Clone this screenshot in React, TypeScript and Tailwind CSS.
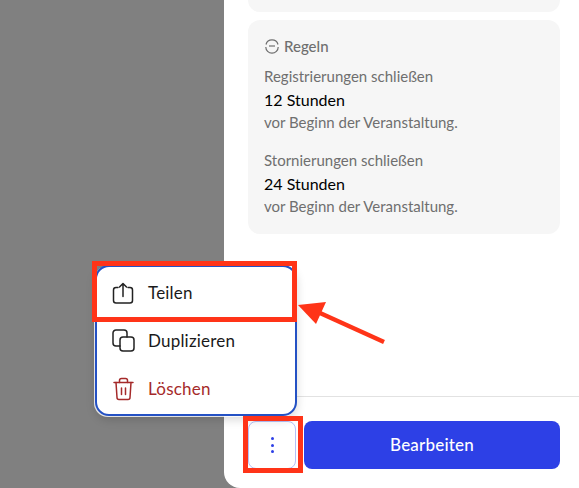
const font = "font-['Lato',sans-serif]";

export default function App() {
  return (
    <div className={`relative w-[579px] h-[488px] overflow-hidden bg-[#808080] ${font}`}>
      {/* side panel */}
      <div className="absolute left-[224px] top-0 bottom-0 w-[355px] bg-white rounded-bl-2xl flex flex-col">
        <div className="flex-1 pl-6 pr-[19px] flex flex-col gap-2">
          <div className="h-3 bg-[#f6f6f6] rounded-b-xl" />
          <div className="h-[214px] bg-[#f6f6f6] rounded-xl px-4 pt-[18px]">
            <div className="flex items-center gap-1 h-4 text-[15px] font-medium text-[#6f6f6f]">
              <svg viewBox="0 0 16 16" className="w-4 h-4" fill="none" stroke="#6f6f6f" strokeWidth="1.2">
                <path d="M2 6.500a6.200 6.200 0 0 1 12 0M14.200 9a6.200 6.200 0 0 1-12.400 0" />
                <path d="M5 8h6" />
              </svg>
              Regeln
            </div>
            <div className="mt-[14px] text-[15px] leading-4 text-[#6f6f6f]">Registrierungen schließen</div>
            <div className="mt-[8px] text-base leading-4 text-black">12 Stunden</div>
            <div className="mt-[6px] text-[15px] leading-4 text-[#6f6f6f]">vor Beginn der Veranstaltung.</div>
            <div className="mt-[22px] text-[15px] leading-4 text-[#6f6f6f]">Stornierungen schließen</div>
            <div className="mt-[8px] text-base leading-4 text-black">24 Stunden</div>
            <div className="mt-[6px] text-[15px] leading-4 text-[#6f6f6f]">vor Beginn der Veranstaltung.</div>
          </div>
        </div>
        <div className="h-[92px] border-t border-[#e2e2e2] pl-6 pr-[19px] pt-6 flex gap-2">
          <button className="w-12 h-12 rounded-lg border border-[#b5c0f8] bg-white flex flex-col items-center justify-center gap-[3.5px]">
            <span className="w-[3px] h-[3px] rounded-full bg-[#2d40e6]" />
            <span className="w-[3px] h-[3px] rounded-full bg-[#2d40e6]" />
            <span className="w-[3px] h-[3px] rounded-full bg-[#2d40e6]" />
          </button>
          <button className="flex-1 h-12 rounded-lg bg-[#2d40e6] text-white text-[17px] font-medium tracking-[0.2px]">Bearbeiten</button>
        </div>
      </div>

      {/* popup menu */}
      <div className="absolute left-[95px] top-[265px] w-[202px] h-[151px] bg-white rounded-[14px] border-2 border-[#2451c4] shadow-[-1px_1px_0_0_rgba(255,255,255,0.8),0_4px_10px_rgba(0,0,0,0.15)] flex flex-col pt-[2px]">
        <div className="h-12 flex items-center gap-[13px] pl-[14px] text-[17px] tracking-[0.2px] text-[#1a1a1a]">
          <svg viewBox="0 0 24 24" className="w-6 h-6" fill="none" stroke="#222" strokeWidth="1.500" strokeLinecap="round" strokeLinejoin="round">
            <path d="M7 6.500H5A2.500 2.500 0 0 0 2.500 9v10.500A2.500 2.500 0 0 0 5 22h14a2.500 2.500 0 0 0 2.500-2.500V9A2.500 2.500 0 0 0 19 6.500h-2" />
            <path d="M12 15.500V2.500M8.500 6 12 2.500 15.500 6" />
          </svg>
          Teilen
        </div>
        <div className="h-12 flex items-center gap-[13px] pl-[14px] text-[17px] tracking-[0.2px] text-[#1a1a1a]">
          <svg viewBox="0 0 24 24" className="w-6 h-6" fill="none" stroke="#222" strokeWidth="1.500" strokeLinecap="round" strokeLinejoin="round">
            <path d="M9 17H5a3 3 0 0 1-3-3V4a3 3 0 0 1 3-3h8a3 3 0 0 1 3 3v4" />
            <rect x="9" y="8" width="14" height="14" rx="3" />
          </svg>
          Duplizieren
        </div>
        <div className="h-12 flex items-center gap-[13px] pl-[14px] text-[17px] tracking-[0.2px] text-[#a52a2a]">
          <svg viewBox="0 0 24 24" className="w-6 h-6" fill="none" stroke="#a52a2a" strokeWidth="1.500" strokeLinecap="round" strokeLinejoin="round">
            <path d="M3 5.500h19" />
            <path d="M8.500 5.500V3.500a2 2 0 0 1 2-2h4a2 2 0 0 1 2 2v2" />
            <path d="M5 5.500l1 15a2 2 0 0 0 2 2h9a2 2 0 0 0 2-2l1-15" />
            <path d="M10.500 11v6.500M14.500 11v6.500" />
          </svg>
          Löschen
        </div>
      </div>

      {/* annotations */}
      <div className="absolute left-[92px] top-[261px] w-[205px] h-[61px] border-[5px] border-[#ff3418]" />
      <div className="absolute left-[243px] top-[416px] w-[60px] h-[57px] border-[5px] border-[#ff3418]" />
      <svg className="absolute left-[295px] top-[295px]" width="95" height="50" viewBox="0 0 95 50">
        <path d="M89 47 L25 18" stroke="#ff3418" strokeWidth="4.500" />
        <path d="M3 10 L31 7 L21 29 Z" fill="#ff3418" />
      </svg>
    </div>
  );
}
